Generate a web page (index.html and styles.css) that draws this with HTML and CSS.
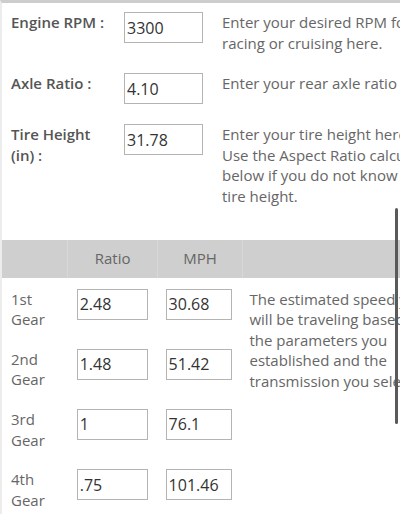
FILE: index.html
```html
<!DOCTYPE html>
<html lang="en">
<head>
    <meta charset="UTF-8">
    <meta name="viewport" content="width=device-width, initial-scale=1.0">
    <title>Gear Ratio Calculator</title>
    <link rel="stylesheet" href="styles.css">
</head>
<body>
    <div class="calc">
        <table class="params">
            <tr>
                <td class="label">Engine RPM :</td>
                <td class="field"><input type="text" class="box" value="3300"></td>
                <td class="desc">Enter your desired RPM for<br>racing or cruising here.</td>
            </tr>
            <tr>
                <td class="label">Axle Ratio :</td>
                <td class="field"><input type="text" class="box" value="4.10"></td>
                <td class="desc">Enter your rear axle ratio here.</td>
            </tr>
            <tr>
                <td class="label">Tire Height<br>(in) :</td>
                <td class="field"><input type="text" class="box" value="31.78"></td>
                <td class="desc">Enter your tire height here.<br>Use the Aspect Ratio calculator<br>below if you do not know your<br>tire height.</td>
            </tr>
        </table>

        <table class="gears">
            <tr class="head">
                <th class="col-gear"></th>
                <th class="col-ratio">Ratio</th>
                <th class="col-mph">MPH</th>
                <th class="col-desc"></th>
            </tr>
            <tr>
                <td class="gear">1st<br>Gear</td>
                <td class="ratio"><input type="text" class="box small" value="2.48"></td>
                <td class="mph"><input type="text" class="box smaller" value="30.68"></td>
                <td class="desc" rowspan="4">The estimated speed you<br>will be traveling based on<br>the parameters you<br>established and the<br>transmission you selected.</td>
            </tr>
            <tr>
                <td class="gear">2nd<br>Gear</td>
                <td class="ratio"><input type="text" class="box small" value="1.48"></td>
                <td class="mph"><input type="text" class="box smaller" value="51.42"></td>
            </tr>
            <tr>
                <td class="gear">3rd<br>Gear</td>
                <td class="ratio"><input type="text" class="box small" value="1"></td>
                <td class="mph"><input type="text" class="box smaller" value="76.1"></td>
            </tr>
            <tr>
                <td class="gear">4th<br>Gear</td>
                <td class="ratio"><input type="text" class="box small" value=".75"></td>
                <td class="mph"><input type="text" class="box smaller" value="101.46"></td>
            </tr>
        </table>
    </div>
    <div class="scroll-thumb"></div>
</body>
</html>
```

FILE: styles.css
```css
* {
    margin: 0;
    padding: 0;
    box-sizing: border-box;
}

html, body {
    height: 100%;
    overflow: hidden;
}

body {
    font-family: 'Open Sans', sans-serif;
    font-size: 15px;
    line-height: 20.6px;
    color: #666;
    background-color: #fff;
}

.calc {
    width: 640px;
    border-top: 3px solid #cdcdcd;
    border-left: 2px solid #ececec;
    min-height: 100%;
}

table {
    border-collapse: collapse;
}

td, th {
    vertical-align: top;
    text-align: left;
    white-space: nowrap;
}

/* top parameters */
.params {
    margin-bottom: 22px;
}

.params td {
    padding: 9px 0 11px;
}

.params .label {
    width: 122px;
    padding-left: 9px;
    font-weight: 600;
    color: #555;
}

.params .field {
    width: 98px;
}

.box {
    display: block;
    width: 79px;
    height: 31px;
    border: 1px solid #b4b4b4;
    padding: 0 2px;
    font-family: 'Open Sans', sans-serif;
    font-size: 16px;
    color: #333;
    background: #fff;
    outline: none;
}

.box.small {
    width: 71px;
}

.box.smaller {
    width: 66px;
}

/* gear table */
.gears .head th {
    height: 38px;
    background-color: #cfcfcf;
    font-weight: 400;
    text-align: center;
    vertical-align: middle;
    color: #666;
    border-left: 1px solid #d8d8d8;
}

.gears .head th:first-child {
    border-left: none;
}

.col-gear {
    width: 66px;
}

.col-ratio {
    width: 90px;
}

.col-mph {
    width: 85px;
}

.col-desc {
    width: 400px;
}

.gears td {
    padding: 10px 0 9px;
}

.gears tr:nth-child(2) td {
    padding-top: 11px;
}

.gears .gear {
    padding-left: 9px;
}

.gears .ratio {
    padding-left: 9px;
}

.gears .mph {
    padding-left: 8px;
}

.gears .desc {
    padding-left: 7px;
}

.scroll-thumb {
    position: absolute;
    top: 208px;
    left: 395px;
    width: 3px;
    height: 216px;
    border-radius: 2px;
    background-color: #5a5a5a;
}
```
